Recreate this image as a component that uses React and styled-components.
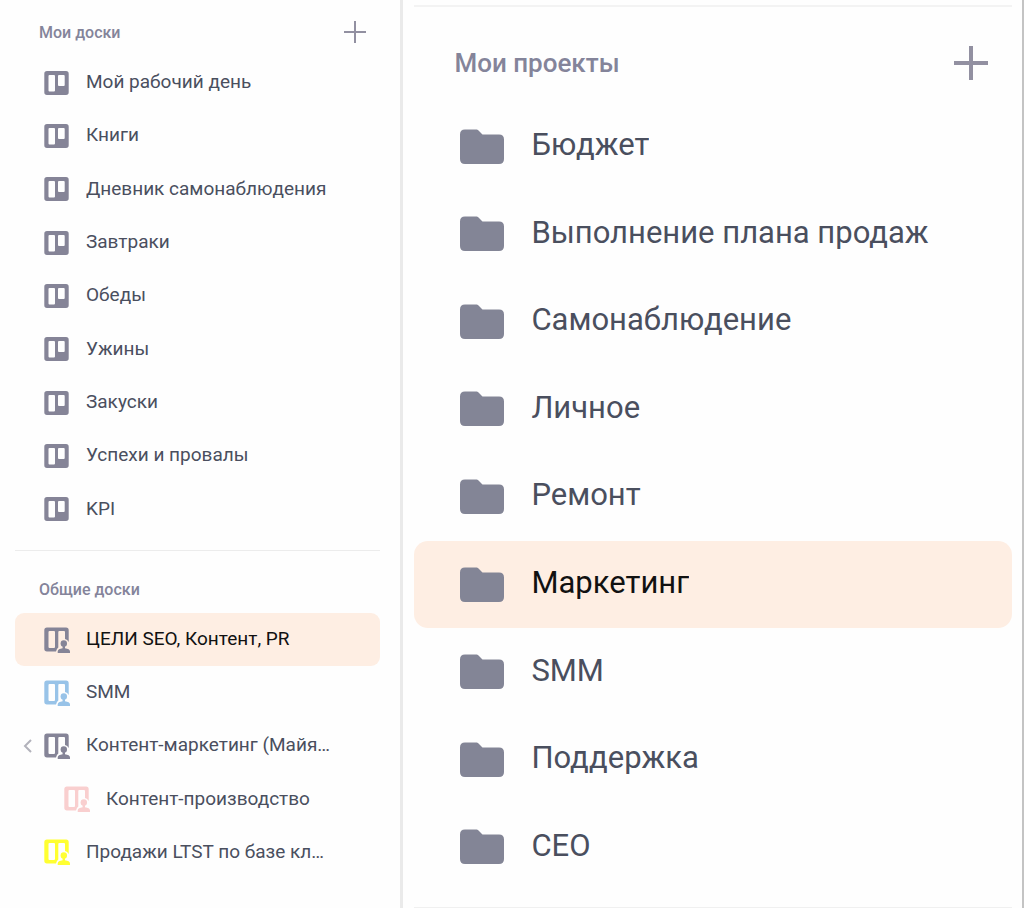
import styled, { createGlobalStyle } from "styled-components";

const GlobalStyle = createGlobalStyle`
  * {
    box-sizing: border-box;
  }

  body {
    margin: 0;
    background: #fefefe;
    font-family: Roboto, "Liberation Sans", sans-serif;
  }
`;

const Page = styled.div`
  display: grid;
  grid-template-columns: 13fr 20fr;
  min-height: 100vh;
`;

const BoardsPanel = styled.nav`
  min-width: 0;
  padding: 8px 20px 0 15px;
  border-right: 3px solid #eaeaea;
`;

const ProjectsPanel = styled.nav`
  min-width: 0;
  padding: 5px 10px 0 11px;
  border-right: 2px solid #c4c4c4;
`;

const Divider = styled.hr`
  height: ${({ $large }) => ($large ? 2 : 1)}px;
  margin: ${({ $large }) => ($large ? "0 0 16px" : "14px 0")};
  border: 0;
  background: ${({ $large }) => ($large ? "#f3f3f3" : "#ececec")};
`;

const EndDivider = styled.hr`
  height: 1px;
  margin: 16px 0 0;
  border: 0;
  background: #f0f0f0;
`;

const Header = styled.header`
  display: flex;
  align-items: center;
  justify-content: space-between;
  height: ${({ $large }) => ($large ? 80 : 48)}px;
  padding: ${({ $large }) => ($large ? "0 24px 0 40px" : "0 14px 0 24px")};
`;

const Title = styled.h2`
  margin: 0;
  color: #84849a;
  font-size: ${({ $large }) => ($large ? 26 : 16)}px;
  font-weight: 500;
`;

const IconButton = styled.button`
  display: flex;
  padding: 0;
  border: 0;
  background: none;
  color: #9290a1;
  cursor: pointer;
`;

const List = styled.ul`
  display: grid;
  grid-auto-rows: 1fr;
  min-height: ${({ $height }) => $height}px;
  margin: 0;
  padding: 0;
  list-style: none;
`;

const Row = styled.li`
  display: flex;
  align-items: center;
  min-width: 0;
  border-radius: ${({ $large }) => ($large ? 14 : 9)}px;
  background: ${({ $active }) => ($active ? "#feeee3" : "transparent")};
`;

const Slot = styled.div`
  flex: none;
  width: ${({ $width }) => $width}px;
  padding-left: 8px;
  color: #b2b2bb;

  button {
    color: inherit;
  }
`;

const RowLink = styled.a`
  display: flex;
  flex: 1;
  align-items: center;
  gap: ${({ $large }) => ($large ? 27 : 16)}px;
  min-width: 0;
  color: ${({ $active }) => ($active ? "#111111" : "#4a4f5e")};
  font-size: ${({ $large }) => ($large ? 31 : 19)}px;
  text-decoration: none;

  svg {
    flex: none;
  }
`;

const Label = styled.span`
  overflow: hidden;
  padding-bottom: ${({ $large }) => ($large ? 4 : 2)}px;
  text-overflow: ellipsis;
  white-space: nowrap;
`;

const PlusIcon = ({ size, stroke }) => (
  <svg width={size} height={size} viewBox={`0 0 ${size} ${size}`}>
    <path
      d={`M${size / 2} 0V${size}M0 ${size / 2}H${size}`}
      stroke="currentColor"
      strokeWidth={stroke}
    />
  </svg>
);

const ChevronIcon = () => (
  <svg width="10" height="16" viewBox="0 0 10 16" fill="none">
    <path d="M8 2L2 8l6 6" stroke="currentColor" strokeWidth="2" />
  </svg>
);

const BoardIcon = () => (
  <svg width="26" height="26" viewBox="0 0 26 26">
    <path
      fill="#858497"
      fillRule="evenodd"
      d="M3 1h19q2.700 0 2.700 2.700v18.600q0 2.700-2.700 2.700H3Q.300 25 .300 22.300V3.700Q.300 1 3 1zM5.500 5Q4.500 5 4.500 6v14.500q0 1 1 1h4.500q1 0 1-1V6q0-1-1-1zM15 5q-1 0-1 1v9q0 1 1 1h4.700q1 0 1-1V6q0-1-1-1z"
    />
  </svg>
);

const SharedBoardIcon = ({ color = "#858497" }) => (
  <svg width="26" height="26" viewBox="0 0 26 26" fill={color}>
    <path
      fillRule="evenodd"
      d="M3 .500h19q2.700 0 2.700 2.700v11.800q-1.200-2.300-3.700-3V5q0-1-1-1h-4.700q-1 0-1 1v15.500q-1.500 1-2.300 4H3Q.300 24.500 .300 21.800V3.200Q.300 .500 3 .500zM5.500 4q-1 0-1 1v15q0 1 1 1h4.500q1 0 1-1V5q0-1-1-1z"
    />
    <circle cx="19.800" cy="16.500" r="3.200" />
    <path d="M18.600 18.500h2.400v2.700c3 .300 5 1.600 5 3.300v1.500H13.700v-1.500c0-1.700 2-3 4.900-3.300z" />
  </svg>
);

const FolderIcon = () => (
  <svg width="44" height="36" viewBox="0 0 44 36">
    <path
      fill="#838596"
      d="M5 .500h10.500c1.600 0 2.500.400 3.500 1.400L22.500 5.500H39q5 0 5 5v19.500q0 5-5 5H5q-5 0-5-5V5.500q0-5 5-5z"
    />
  </svg>
);

const myBoards = [
  "Мой рабочий день",
  "Книги",
  "Дневник самонаблюдения",
  "Завтраки",
  "Обеды",
  "Ужины",
  "Закуски",
  "Успехи и провалы",
  "KPI",
];

const sharedBoards = [
  { name: "ЦЕЛИ SEO, Контент, PR", active: true },
  { name: "SMM", color: "#98c3e8" },
  { name: "Контент-маркетинг (Майя…", expandable: true },
  { name: "Контент-производство", color: "#f9cfcf", nested: true },
  { name: "Продажи LTST по базе кл…", color: "#ffff32" },
];

const projects = [
  "Бюджет",
  "Выполнение плана продаж",
  "Самонаблюдение",
  "Личное",
  "Ремонт",
  "Маркетинг",
  "SMM",
  "Поддержка",
  "CEO",
];

function App() {
  return (
    <>
      <GlobalStyle />
      <Page>
        <BoardsPanel>
          <Header>
            <Title>Мои доски</Title>
            <IconButton aria-label="Добавить доску">
              <PlusIcon size={22} stroke={2} />
            </IconButton>
          </Header>
          <List $height={480}>
            {myBoards.map((name) => (
              <Row key={name}>
                <Slot $width={29} />
                <RowLink href="#">
                  <BoardIcon />
                  <Label>{name}</Label>
                </RowLink>
              </Row>
            ))}
          </List>

          <Divider />

          <Header>
            <Title>Общие доски</Title>
          </Header>
          <List $height={266}>
            {sharedBoards.map(({ name, color, active, nested, expandable }) => (
              <Row key={name} $active={active}>
                <Slot $width={nested ? 49 : 29}>
                  {expandable && (
                    <IconButton aria-label="Свернуть">
                      <ChevronIcon />
                    </IconButton>
                  )}
                </Slot>
                <RowLink href="#" $active={active}>
                  <SharedBoardIcon color={color} />
                  <Label>{name}</Label>
                </RowLink>
              </Row>
            ))}
          </List>
        </BoardsPanel>

        <ProjectsPanel>
          <Divider $large />
          <Header $large>
            <Title $large>Мои проекты</Title>
            <IconButton aria-label="Добавить проект">
              <PlusIcon size={34} stroke={4} />
            </IconButton>
          </Header>
          <List $height={788}>
            {projects.map((name) => (
              <Row key={name} $large $active={name === "Маркетинг"}>
                <Slot $width={46} />
                <RowLink href="#" $large $active={name === "Маркетинг"}>
                  <FolderIcon />
                  <Label $large>{name}</Label>
                </RowLink>
              </Row>
            ))}
          </List>
          <EndDivider />
        </ProjectsPanel>
      </Page>
    </>
  );
}

export default App;
